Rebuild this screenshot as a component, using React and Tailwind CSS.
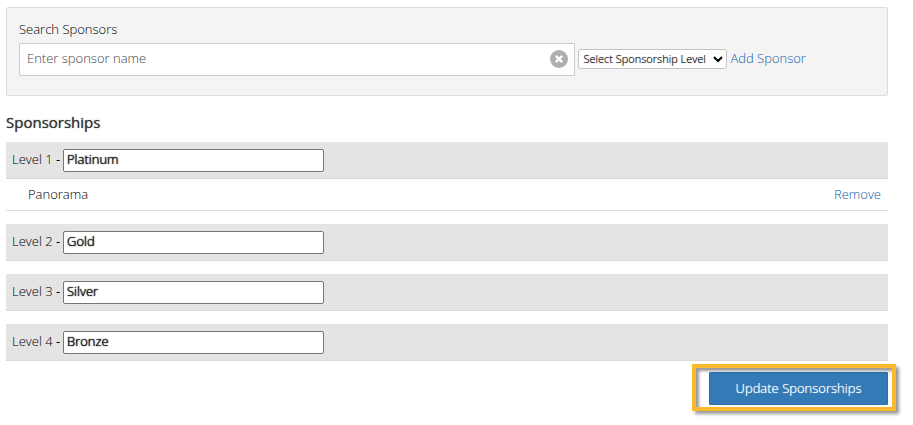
import React, { useState } from 'react';

const initialLevels = [
  { id: 1, name: 'Platinum', sponsors: ['Panorama'] },
  { id: 2, name: 'Gold', sponsors: [] },
  { id: 3, name: 'Silver', sponsors: [] },
  { id: 4, name: 'Bronze', sponsors: [] },
];

const ClearIcon = () => (
  <svg viewBox="0 0 18 18" className="w-[18px] h-[18px]" aria-hidden="true">
    <circle cx="9" cy="9" r="9" fill="#aeafb3" />
    <path d="M5.8 5.8l6.4 6.4M12.2 5.8l-6.4 6.4" stroke="#fff" strokeWidth="2.4" />
  </svg>
);

const SponsorSearch = ({ levels, onAdd }) => {
  const [query, setQuery] = useState('');
  const [level, setLevel] = useState('');

  const handleAdd = (e) => {
    e.preventDefault();
    if (!query || !level) return;
    onAdd(Number(level), query);
    setQuery('');
  };

  return (
    <section className="h-[89px] px-3 pt-[11px] bg-[#f4f4f4] border border-[#dddddd] rounded-xs">
      <label htmlFor="sponsor" className="block h-6 leading-5">Search Sponsors</label>
      <div className="flex items-center">
        <div className="relative w-[65%] mr-[3px]">
          <input
            id="sponsor"
            type="text"
            value={query}
            onChange={(e) => setQuery(e.target.value)}
            placeholder="Enter sponsor name"
            className="block w-full h-[33px] pl-[7px] pr-8 pb-1 bg-white border border-[#cccccc] rounded-[1px] placeholder:text-[#444444]"
          />
          <button type="button" aria-label="Clear" onClick={() => setQuery('')} className="absolute right-[7px] top-[7px]">
            <ClearIcon />
          </button>
        </div>
        <select
          aria-label="Sponsorship level"
          value={level}
          onChange={(e) => setLevel(e.target.value)}
          className="w-[149px] h-5 mb-[2px] mr-[3px] bg-white border border-[#c4c4c4] rounded-[3px] text-[11px] text-black [text-shadow:0_0_1px_#777777]"
        >
          <option value="">Select Sponsorship Level</option>
          {levels.map((l) => <option key={l.id} value={l.id}>{l.name}</option>)}
        </select>
        <a href="#add" onClick={handleAdd} className="pb-[3px] text-[#1560a8] whitespace-nowrap">Add Sponsor</a>
      </div>
    </section>
  );
};

const LevelGroup = ({ level, onRename, onRemove }) => (
  <div>
    <div className="flex items-center h-[37px] px-[6px] bg-[#e4e4e4] border-b border-[#d9d9d9]">
      <label htmlFor={`level-${level.id}`} className="w-[51px] pb-[2px] whitespace-nowrap">
        Level {level.id} <span className="font-normal">-</span>
      </label>
      <input
        id={`level-${level.id}`}
        type="text"
        value={level.name}
        onChange={(e) => onRename(level.id, e.target.value)}
        className="w-[261px] h-[23px] px-[3px] pb-[2px] bg-white border border-[#767676] rounded-xs text-[#222222] [text-shadow:0_0_1px_#222222,0_0_1px_#222222]"
      />
    </div>
    {level.sponsors.map((name) => (
      <div key={name} className="flex items-center justify-between h-8 pb-[2px] pl-[22px] pr-[7px] border-b border-[#dddddd]">
        <span>{name}</span>
        <a href="#remove" onClick={(e) => { e.preventDefault(); onRemove(level.id, name); }} className="text-[#1560a8]">
          Remove
        </a>
      </div>
    ))}
  </div>
);

const App = () => {
  const [levels, setLevels] = useState(initialLevels);

  const change = (id, update) => setLevels(levels.map((l) => (l.id === id ? { ...l, ...update(l) } : l)));
  const addSponsor = (id, name) => change(id, (l) => ({ sponsors: [...l.sponsors, name] }));
  const removeSponsor = (id, name) => change(id, (l) => ({ sponsors: l.sponsors.filter((s) => s !== name) }));
  const rename = (id, name) => change(id, () => ({ name }));

  return (
    <main className="pl-[6px] pr-[25px] pt-[7px] pb-4 bg-white font-['Open_Sans','Noto_Sans',sans-serif] font-light text-[13px] leading-5 text-black">
      <SponsorSearch levels={levels} onAdd={addSponsor} />

      <h2 className="mt-4 mb-[10px] text-[15px] leading-5 font-normal text-[#333333] [text-shadow:0_0_1px_#555555]">Sponsorships</h2>
      <div className="flex flex-col gap-[13px]">
        {levels.map((level) => (
          <LevelGroup key={level.id} level={level} onRename={rename} onRemove={removeSponsor} />
        ))}
      </div>

      <div className="flex justify-end mt-[11px]">
        <div className="relative">
          <button type="button" className="block w-[179px] h-[33px] pb-[2px] bg-[#337ab7] border border-[#2e6da4] rounded-[1px] text-white [text-shadow:0_0_1px_#ffffff]">
            Update Sponsorships
          </button>
          <div className="absolute -left-[17px] -right-2 -top-2 -bottom-[6px] border-4 border-[#fbba2d] shadow-[3px_3px_3px_rgba(0,0,0,0.4),inset_3px_3px_3px_rgba(0,0,0,0.4)] pointer-events-none" />
        </div>
      </div>
    </main>
  );
};

export default App;
